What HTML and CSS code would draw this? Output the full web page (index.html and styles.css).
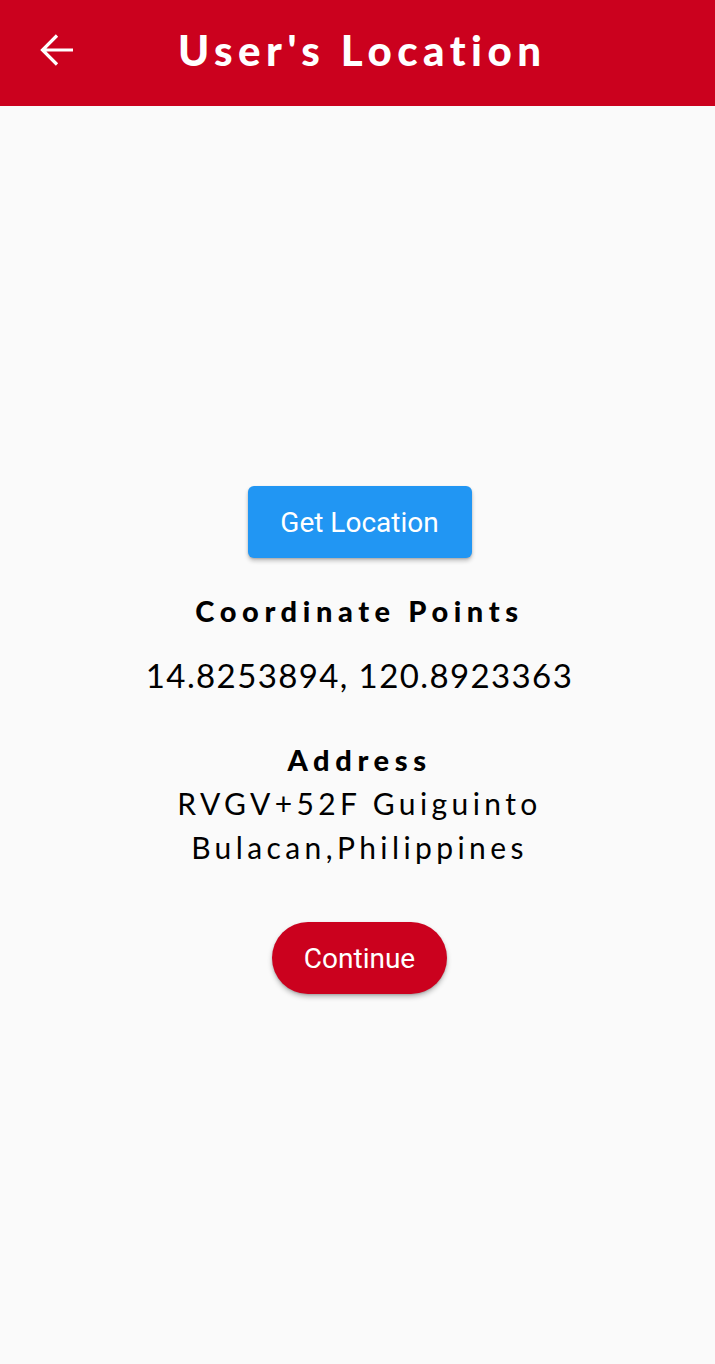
FILE: index.html
```html
<!DOCTYPE html>
<html>
<head>
<meta charset="utf-8">
<link rel="stylesheet" href="styles.css">
</head>
<body>
<header class="appbar">
  <button class="back" aria-label="Back">
    <svg viewBox="0 0 34 32" width="34" height="32"><path d="M33 16H3M17 1.5L2.5 16L17 30.5" fill="none" stroke="#fff" stroke-width="3.2" stroke-linecap="butt" stroke-linejoin="miter"/></svg>
  </button>
  <h1 class="title">User's Location</h1>
</header>
<main class="content">
  <button class="btn-get">Get Location</button>
  <h2 class="label label-coords">Coordinate Points</h2>
  <p class="coords">14.8253894, 120.8923363</p>
  <h2 class="label label-address">Address</h2>
  <p class="address">RVGV+52F Guiguinto<br>Bulacan,Philippines</p>
  <button class="btn-continue">Continue</button>
</main>
</body>
</html>
```
FILE: styles.css
```css
html, body {
  margin: 0;
  padding: 0;
  background: #fafafa;
  width: 715px;
  height: 1364px;
  overflow: hidden;
}
body {
  font-family: Lato, "Open Sans", sans-serif;
  color: #000;
}
.appbar {
  height: 106px;
  background: #cb011e;
  display: flex;
  align-items: center;
}
.back {
  background: none;
  border: 0;
  padding: 0;
  margin: 0 0 6px 40px;
  width: 34px;
  height: 32px;
  display: flex;
}
.title {
  margin: 0 0 6px 104px;
  color: #fff;
  font-family: Lato, sans-serif;
  font-weight: 900;
  font-size: 42px;
  letter-spacing: 5.5px;
  line-height: 50px;
}
.content {
  display: flex;
  flex-direction: column;
  align-items: center;
  padding: 380px 0 0 4px;
  text-align: center;
}
.btn-get {
  width: 224px;
  height: 72px;
  border: 0;
  border-radius: 6px;
  background: #2196f3;
  color: #fff;
  font-family: Roboto, sans-serif;
  font-size: 28px;
  box-shadow: 0 3px 4px rgba(0,0,0,0.22), 0 1px 2px rgba(0,0,0,0.15);
}
.label {
  margin: 0;
  font-weight: 900;
  font-size: 29px;
  line-height: 40px;
  letter-spacing: 5.6px;
}
.label-coords { margin-top: 33px; }
.coords {
  margin: 22px 0 0;
  font-size: 33px;
  line-height: 44px;
  letter-spacing: 1.4px;
  font-weight: 400;
}
.label-address { margin-top: 43px; }
.address {
  margin: 1px 0 0;
  font-size: 30px;
  line-height: 44px;
  letter-spacing: 4.4px;
}
.btn-continue {
  margin-top: 53px;
  width: 175px;
  height: 72px;
  border: 0;
  border-radius: 36px;
  background: #cb011e;
  color: #fff;
  font-family: Roboto, sans-serif;
  font-size: 28px;
  box-shadow: 0 3px 5px rgba(0,0,0,0.25), 0 1px 2px rgba(0,0,0,0.15);
}
```
